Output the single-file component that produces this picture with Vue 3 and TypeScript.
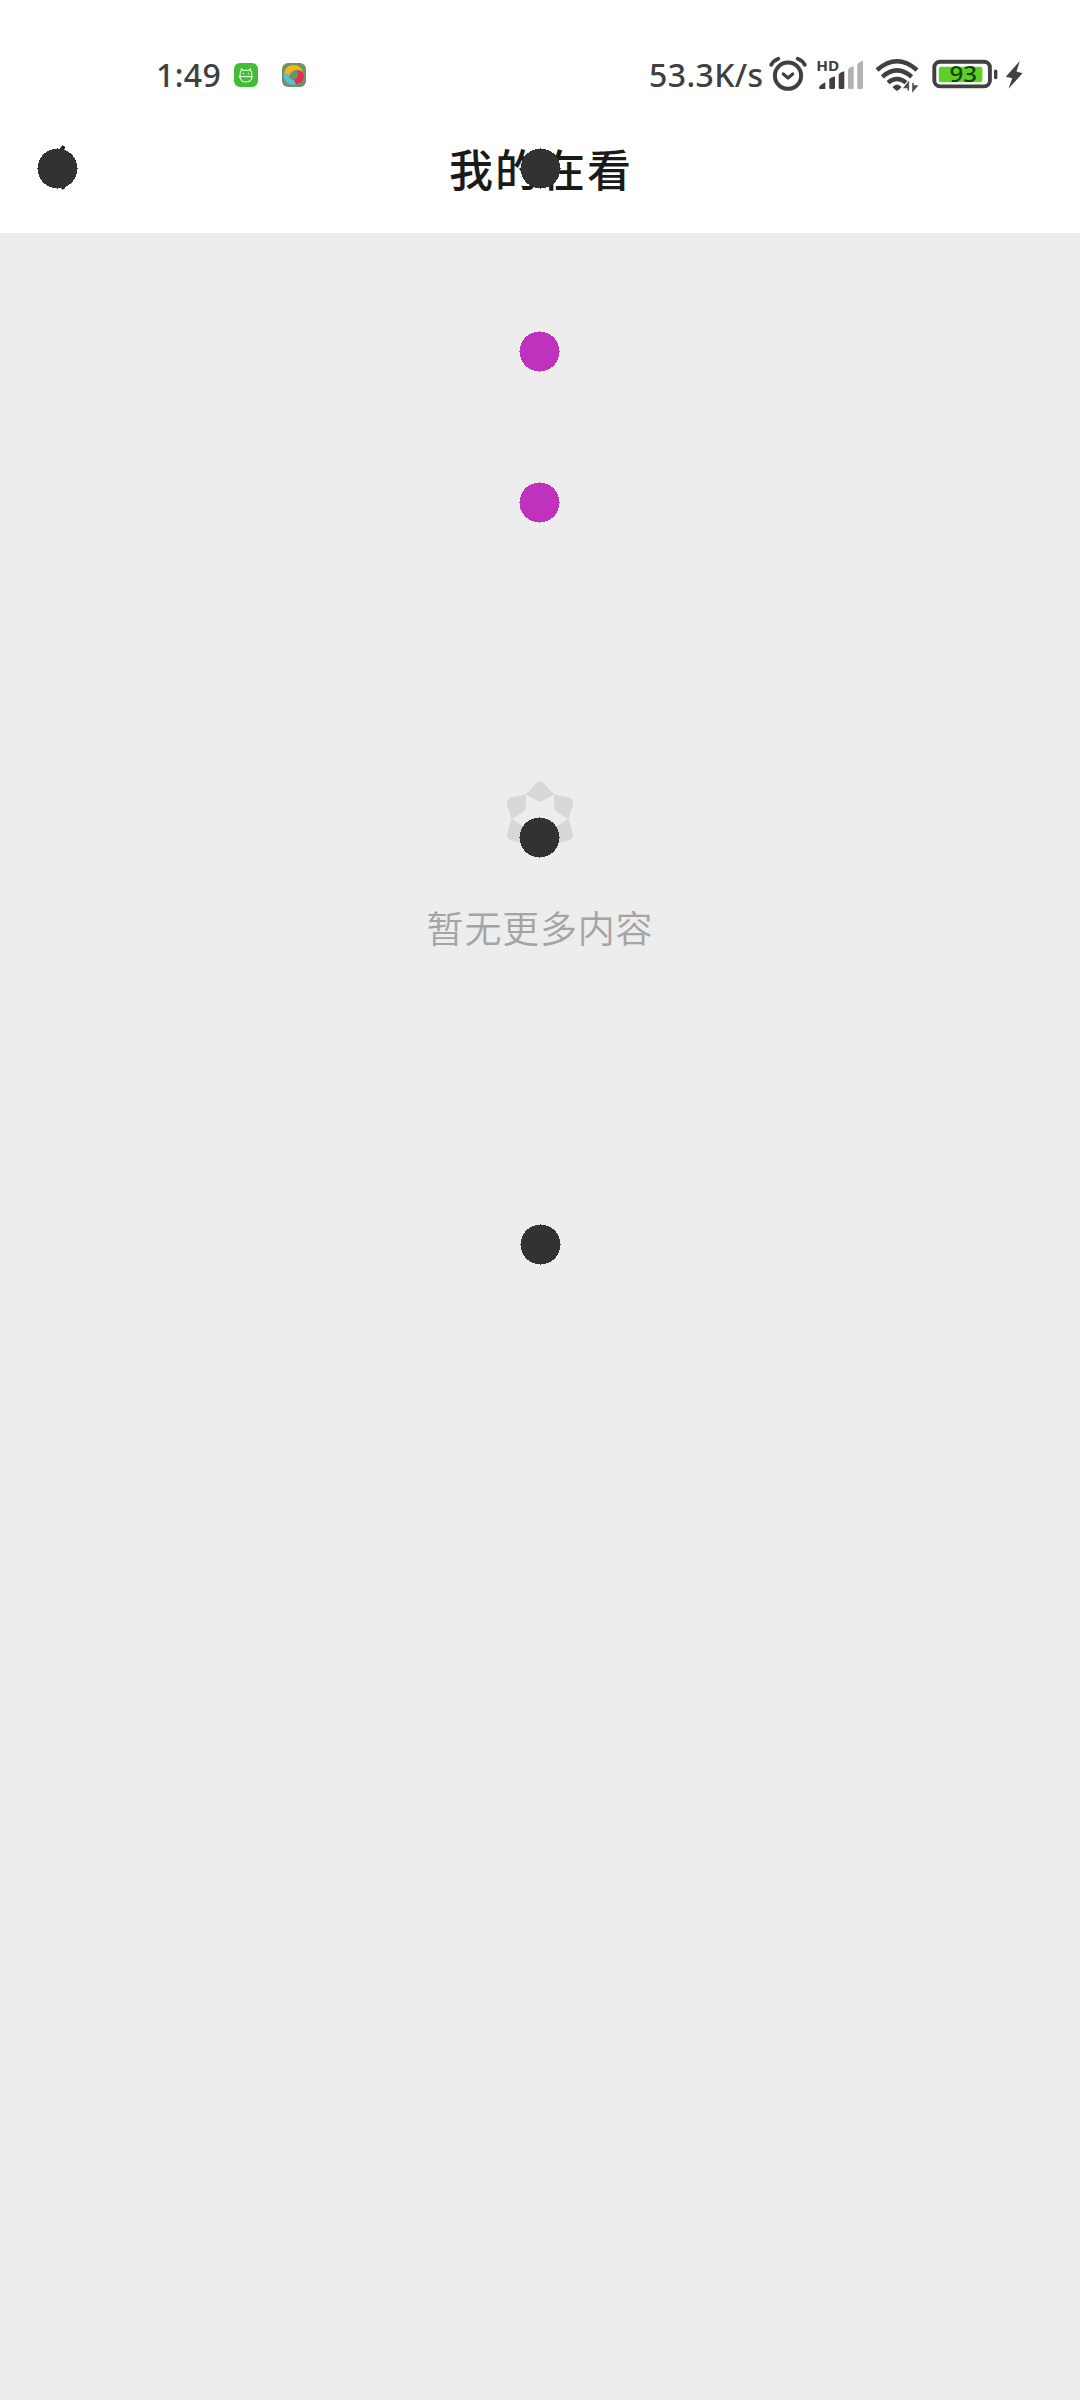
<script setup lang="ts">
interface Dot { x: number; y: number; tone: 'dark' | 'purple' }

const dots: Dot[] = [
  { x: 57, y: 168, tone: 'dark' },
  { x: 540, y: 168, tone: 'dark' },
  { x: 539, y: 351, tone: 'purple' },
  { x: 539, y: 502, tone: 'purple' },
  { x: 539, y: 837, tone: 'dark' },
  { x: 540, y: 1244, tone: 'dark' },
]
const petals: number[] = [0, 60, 120, 180, 240, 300]
</script>

<template>
  <div class="screen">
    <header class="top">
      <div class="status">
        <span class="time">1:49</span>
        <svg class="app" width="24" height="24" viewBox="0 0 24 24">
          <rect width="24" height="24" rx="6" fill="#43bd38" />
          <g fill="none" stroke="#d9f5d3" stroke-width="1.2" stroke-linecap="round" stroke-linejoin="round">
            <path d="M6.2 13V10Q6.2 8.5 7.2 8V5.8L9 7.3H14.8L16.6 5.8V8Q17.7 8.5 17.7 10V13M5.2 13.7H18.6M6 14Q6.5 19 12 19T18 14" />
            <path d="M9.3 10.5v.3M14.4 10.5v.3" stroke-width="1.5" />
          </g>
        </svg>
        <svg class="app second" width="24" height="24" viewBox="0 0 24 24">
          <rect width="24" height="24" rx="6" fill="#6b9568" />
          <path d="M2 10Q4 2 12 2Q19 2 21 9Q16 5 11 8Q8 10 7 13Q5 10 2 10Z" fill="#f8b21c" />
          <path d="M15 8Q21 7 22 13Q22 19 15 21Q10 21 10 17Q17 16 16 11Q16 9 15 8Z" fill="#e12e55" />
          <path d="M2 10Q6 9 7 13Q8 17 12 17L14 21.5Q7 23 3.5 18Q1 14 2 10Z" fill="#5cbfd6" />
        </svg>
        <span class="speed">53.3K/s</span>
        <svg width="46" height="50" viewBox="766 50 46 50" fill="none" stroke="#404042" stroke-linecap="round">
          <circle cx="788" cy="75.7" r="13.1" stroke-width="4" />
          <path d="M783.3 74L788 78L792.7 74" stroke-width="3.2" stroke-linejoin="round" />
          <path d="M771.2 64.8Q773.5 60.5 778.3 58.7M804.8 64.8Q802.5 60.5 797.7 58.7" stroke-width="3.8" />
        </svg>
        <svg width="58" height="50" viewBox="812 50 58 50">
          <text x="816.2" y="70.7" class="hd" textLength="23" lengthAdjust="spacingAndGlyphs">HD</text>
          <g fill="#404042">
            <path d="M819 87.5Q819 85.5 825.3 82.2V89H820.3Q819 89 819 87.5Z" />
            <path d="M829.3 79.5Q830 77.5 835 76.5V87.5Q835 89 833.5 89H830.8Q829.3 89 829.3 87.5Z" />
            <path d="M838.7 75Q839 72.5 844.3 71.3V87.5Q844.3 89 842.8 89H840.2Q838.7 89 838.7 87.5Z" />
          </g>
          <g fill="#b3b3b3">
            <path d="M848 70Q848.5 67.3 853.7 66.3V87.5Q853.7 89 852.2 89H849.5Q848 89 848 87.5Z" />
            <path d="M857.3 65Q858 62 863 60.8V87.5Q863 89 861.5 89H858.8Q857.3 89 857.3 87.5Z" />
          </g>
        </svg>
        <svg width="54" height="50" viewBox="870 50 54 50">
          <g fill="none" stroke="#404042" stroke-width="4.4">
            <path d="M877 70Q897 52.5 917 70" />
            <path d="M882.3 76.8Q897 64 911.7 76.8" />
            <path d="M888 82.6Q897 75.3 906 82.6" />
          </g>
          <path d="M892.5 87Q897 81.8 901.5 87Q901 88 897 91Q893 88 892.5 87Z" fill="#404042" />
          <path d="M908.3 90.5V82.8L904.6 87.5H908.3M913 83V90.6L916.8 86H913" fill="#505052" stroke="#505052" stroke-width="1.6" />
        </svg>
        <svg width="76" height="50" viewBox="924 50 76 50">
          <rect x="934.3" y="61.8" width="55.6" height="24.6" rx="5.8" fill="#fff" stroke="#404042" stroke-width="3.9" />
          <rect x="938.8" y="66.8" width="43.6" height="15.4" rx="2.2" fill="#60ce29" />
          <rect x="994" y="69.6" width="3.4" height="9.6" rx="1.6" fill="#404042" />
          <text x="949.5" y="81.8" class="level" textLength="27.5" lengthAdjust="spacingAndGlyphs">93</text>
        </svg>
        <svg width="30" height="50" viewBox="1000 50 30 50">
          <path d="M1019.8 61L1005.8 76.7L1012.3 78.2L1008.4 88.8L1022.5 73.3L1016.5 71.6Z" fill="#404042" />
        </svg>
      </div>
      <div class="nav">
        <svg class="back" width="18" height="48" viewBox="0 0 18 48" fill="none" stroke="#222" stroke-width="4" stroke-linecap="round">
          <path d="M14 3.7L1 23.5L14 43.3" />
        </svg>
        <h1>我的在看</h1>
      </div>
    </header>
    <main class="empty">
      <svg width="68" height="78" viewBox="47 42 204 234" fill="#d7d7d7">
        <path
          v-for="a in petals"
          :key="a"
          :transform="`rotate(${a} 149 159)`"
          d="M107 86Q107 84 110 81L138 51Q149 43 160 51L188 81Q191 84 191 86L154 106Q149 109 144 106Z"
        />
      </svg>
      <p>暂无更多内容</p>
    </main>
    <svg class="markers" width="1080" height="2400" viewBox="0 0 1080 2400" shape-rendering="crispEdges">
      <g v-for="(d, i) in dots" :key="i" :class="d.tone">
        <circle :cx="d.x + 0.5" :cy="d.y + 0.5" r="20" />
        <rect :x="d.x - 20" :y="d.y" width="41" height="1" />
        <rect :x="d.x" :y="d.y - 20" width="1" height="41" />
      </g>
    </svg>
  </div>
</template>

<style scoped>
.screen {
  position: relative;
  width: 1080px;
  height: 2400px;
  overflow: hidden;
  background: #ededed;
  font-family: "Noto Sans CJK SC", "Noto Sans", sans-serif;
}
.top {
  height: 233px;
  background: #fff;
}
.status {
  display: flex;
  align-items: center;
  box-sizing: border-box;
  height: 100px;
  padding: 50px 50px 0 156px;
  color: #404042;
}
.status svg {
  flex: none;
}
.time,
.speed {
  font: 500 32px/50px "Noto Sans", sans-serif;
  white-space: nowrap;
  letter-spacing: 0.4px;
}
.time {
  width: 78px;
}
.second {
  margin-left: 24px;
}
.speed {
  width: 117px;
  margin-left: auto;
}
.hd {
  font: 700 14.5px "Noto Sans", sans-serif;
  fill: #404042;
}
.level {
  font: 500 21.5px "Noto Sans", sans-serif;
  fill: #17400b;
}
.nav {
  display: flex;
  align-items: center;
  height: 136px;
  padding-left: 49px;
}
.back {
  flex: none;
}
h1 {
  flex: 1;
  margin: 0 67px 0 0;
  text-align: center;
  font-size: 44px;
  line-height: 64px;
  font-weight: 500;
  letter-spacing: 2px;
  text-indent: 2px;
  color: #1a1a1a;
}
.empty {
  display: flex;
  flex-direction: column;
  align-items: center;
  padding-top: 547px;
}
p {
  margin: 41px 0 0;
  font-size: 37px;
  line-height: 56px;
  letter-spacing: 0.8px;
  font-weight: 350;
  color: #a4a4a4;
}
.markers {
  position: absolute;
  inset: 0;
}
.dark {
  fill: #323232;
}
.purple {
  fill: #be32be;
}
</style>

<style>
body {
  margin: 0;
}
</style>
